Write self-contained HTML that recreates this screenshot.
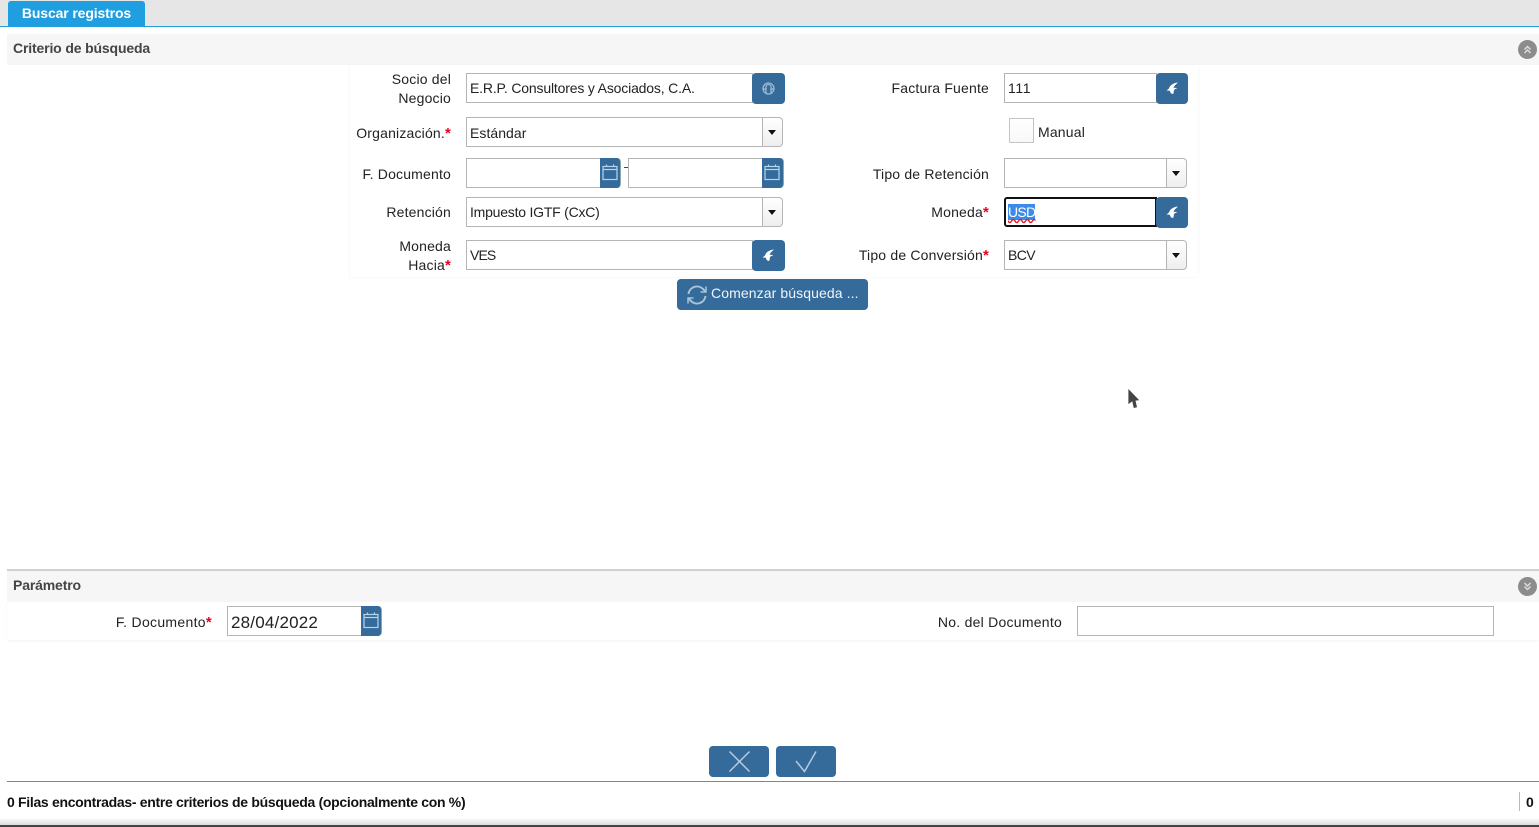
<!DOCTYPE html>
<html><head><meta charset="utf-8"><title>Buscar registros</title>
<style>
html,body{margin:0;padding:0;background:#fff;width:1539px;height:827px;overflow:hidden}
body{position:relative;font-family:"Liberation Sans",sans-serif;font-size:14px;color:#222}
.a{position:absolute;box-sizing:border-box}
.l{position:absolute;text-align:right;line-height:19px;white-space:nowrap;letter-spacing:.18px}
.l i{color:#e8001c;font-style:normal;font-weight:bold;font-size:15px}
.in{position:absolute;box-sizing:border-box;height:30px;background:#fff;border:1px solid #b5b5b5;padding-left:3px;line-height:28px;white-space:nowrap;letter-spacing:-.17px}
.b{position:absolute;box-sizing:border-box;background:#346b9b;border-radius:4px;height:31px}
.c{position:absolute;box-sizing:border-box;background:#346b9b;border-radius:0 4px 4px 0;height:30px;width:21px;border-right:1px solid #8aa}
.d{position:absolute;box-sizing:border-box;width:21px;height:30px;background:linear-gradient(#fff,#eee);border:1px solid #b5b5b5;border-radius:0 4px 4px 0}
.d:after{content:"";position:absolute;left:5px;top:12px;border:4px solid transparent;border-top:5px solid #111;border-bottom:0}
svg{position:absolute;display:block}
.h{position:absolute;left:7px;width:1532px;height:31px;background:#f6f6f6;font-weight:bold;color:#444;line-height:28px;padding-left:6px;box-sizing:border-box;letter-spacing:-.15px}
.t{position:absolute;width:19px;height:19px;border-radius:50%;background:#8c8c8c}
</style></head><body>
<div class="a" style="left:0;top:0;width:1539px;height:26px;background:#e6e6e6"></div>
<div class="a" style="left:0;top:26px;width:1539px;height:1px;background:#1f9fe0"></div>
<div class="a" style="left:8px;top:1px;width:137px;height:25px;background:#1f9fe0;border-radius:3px 3px 0 0;color:#fff;font-weight:bold;text-align:center;line-height:24px;letter-spacing:-.13px">Buscar registros</div>

<div class="h" style="top:34px">Criterio de búsqueda</div>
<div class="t" style="left:1518px;top:40px"><svg width="19" height="19" fill="none" stroke="#ddd" stroke-width="1.5"><path d="M6.500 9.500l3-3 3 3M6.500 13l3-3 3 3"/></svg></div>
<div class="a" style="left:350px;top:65px;width:848px;height:212px;box-shadow:0 0 3px #f2f2f2"></div>

<div class="l" style="left:351px;width:100px;top:70px">Socio del<br>Negocio</div>
<div class="in" style="left:466px;top:73px;width:287px">E.R.P. Consultores y Asociados, C.A.</div>
<div class="b" style="left:752px;top:73px;width:33px"><svg width="33" height="31" fill="none" stroke="#9db8d0" stroke-width="1.300"><circle cx="16.500" cy="15.500" r="5.500"/><path d="M14 20.500V14a2.500 2.500 0 0 1 5 0v6.500M11.500 15.500l3 1.500M21.500 15.500l-3 1.500"/></svg></div>

<div class="l" style="left:351px;width:100px;top:124px">Organización.<i>*</i></div>
<div class="in" style="left:466px;top:117px;width:297px;line-height:30px;letter-spacing:.05px">Estándar</div><div class="d" style="left:762px;top:117px"></div>

<div class="l" style="left:351px;width:100px;top:165px">F. Documento</div>
<div class="in" style="left:466px;top:158px;width:135px"></div>
<div class="c" style="left:600px;top:158px"><svg width="20" height="30" fill="none" stroke="#b9d3e8" stroke-width="1.200"><rect x="3" y="8.500" width="14" height="13"/><path d="M3 11.500h14M6.500 6.500v2M13.500 6.500v2"/></svg></div>
<div class="a" style="left:624px;top:167px;width:4px;height:1px;background:#444"></div>
<div class="in" style="left:628px;top:158px;width:135px"></div>
<div class="c" style="left:762px;top:158px;width:22px"><svg width="20" height="30" fill="none" stroke="#b9d3e8" stroke-width="1.200"><rect x="3" y="8.500" width="14" height="13"/><path d="M3 11.500h14M6.500 6.500v2M13.500 6.500v2"/></svg></div>

<div class="l" style="left:351px;width:100px;top:203px">Retención</div>
<div class="in" style="left:466px;top:197px;width:297px;letter-spacing:-.22px">Impuesto IGTF (CxC)</div><div class="d" style="left:762px;top:197px"></div>

<div class="l" style="left:351px;width:100px;top:237px">Moneda<br>Hacia<i>*</i></div>
<div class="in" style="left:466px;top:240px;width:287px;letter-spacing:-.9px">VES</div>
<div class="b" style="left:752px;top:240px;width:33px"><svg width="33" height="31" fill="#fff"><path d="M22 9.500C16.500 10 13.500 13 13 15.500L10.500 17.500l3.500.3c0 1.700 1.200 3.200 3 3.200 1.200-1.500.3-3 1.500-4.500l3-1.500-4-.3c.5-1.500 2.500-3.500 4.500-5.200z"/></svg></div>

<div class="l" style="left:860px;width:129px;top:79px">Factura Fuente</div>
<div class="in" style="left:1004px;top:73px;width:153px;letter-spacing:.6px">111</div>
<div class="b" style="left:1156px;top:73px;width:32px"><svg width="32" height="31" fill="#fff"><path d="M22 9.500C16.500 10 13.500 13 13 15.500L10.500 17.500l3.500.3c0 1.700 1.200 3.200 3 3.200 1.200-1.500.3-3 1.500-4.500l3-1.500-4-.3c.5-1.500 2.500-3.500 4.500-5.200z"/></svg></div>

<div class="a" style="left:1009px;top:118px;width:25px;height:25px;border:1px solid #c4c4c4;background:linear-gradient(#fff,#f8f8f8)"></div>
<div class="l" style="left:1038px;top:123px;text-align:left">Manual</div>

<div class="l" style="left:860px;width:129px;top:165px">Tipo de Retención</div>
<div class="in" style="left:1004px;top:158px;width:163px"></div><div class="d" style="left:1166px;top:158px"></div>

<div class="l" style="left:860px;width:129px;top:203px">Moneda<i>*</i></div>
<div class="in" style="left:1004px;top:197px;width:153px;border:2px solid #111;border-radius:3px 0 0 3px;padding-left:2px;line-height:26px"><span style="background:#3d8be8;color:#fff;text-decoration:underline wavy #e01b24;letter-spacing:-.7px">USD</span></div>
<div class="b" style="left:1156px;top:197px;width:32px"><svg width="32" height="31" fill="#fff"><path d="M22 9.500C16.500 10 13.500 13 13 15.500L10.500 17.500l3.500.3c0 1.700 1.200 3.200 3 3.200 1.200-1.500.3-3 1.500-4.500l3-1.500-4-.3c.5-1.500 2.500-3.500 4.500-5.200z"/></svg></div>

<div class="l" style="left:850px;width:139px;top:246px">Tipo de Conversión<i>*</i></div>
<div class="in" style="left:1004px;top:240px;width:163px;letter-spacing:-.6px">BCV</div><div class="d" style="left:1166px;top:240px"></div>

<div class="b" style="left:677px;top:279px;width:191px;color:#f0f5fa;line-height:28px;padding-left:34px;white-space:nowrap;letter-spacing:.1px">Comenzar búsqueda ...
<svg style="left:9px;top:5px" width="22" height="22" fill="none" stroke="#a9c2d8" stroke-width="2"><path d="M2.500 10A8.500 8.500 0 0 1 17 5l2.500 2.500M19.500 12A8.500 8.500 0 0 1 5 17l-2.500-2.500"/><path d="M20 2.500V8h-5.500M2 19.500V14h5.500" stroke-width="1.500"/></svg></div>

<svg style="left:1126px;top:386px" width="16" height="25"><path d="M2 2v17l4-3 1.500 6.500 4-1-1.500-6.500 4-.5z" fill="#444" stroke="#fff" stroke-width=".8"/></svg>

<div class="a" style="left:7px;top:569px;width:1532px;height:2px;background:#d0d0cc"></div>
<div class="h" style="top:571px">Parámetro</div>
<div class="t" style="left:1518px;top:577px"><svg width="19" height="19" fill="none" stroke="#ddd" stroke-width="1.500"><path d="M6.500 6l3 3 3-3M6.500 9.500l3 3 3-3"/></svg></div>
<div class="a" style="left:7px;top:602px;width:1532px;height:38px;box-shadow:0 1px 2px #f3f3f3"></div>

<div class="l" style="left:60px;width:152px;top:613px;letter-spacing:.3px">F. Documento<i>*</i></div>
<div class="in" style="left:227px;top:606px;width:135px;font-size:17px;letter-spacing:.2px;color:#222;line-height:31px">28/04/2022</div>
<div class="c" style="left:361px;top:606px"><svg width="20" height="30" fill="none" stroke="#b9d3e8" stroke-width="1.200"><rect x="3" y="8.500" width="14" height="13"/><path d="M3 11.500h14M6.500 6.500v2M13.500 6.500v2"/></svg></div>
<div class="l" style="left:900px;width:162px;top:613px;letter-spacing:.25px">No. del Documento</div>
<div class="in" style="left:1077px;top:606px;width:417px"></div>

<div class="b" style="left:709px;top:746px;width:60px"><svg width="60" height="31" fill="none" stroke="#b5cbdd" stroke-width="1.500"><path d="M20.500 5.500l20 20M40.500 5.500l-20 20"/></svg></div>
<div class="b" style="left:776px;top:746px;width:60px"><svg width="60" height="31" fill="none" stroke="#b5cbdd" stroke-width="1.500"><path d="M20 15l8.500 10.500L40 5.500"/></svg></div>

<div class="a" style="left:7px;top:781px;width:1532px;height:1px;background:#8a8578"></div>
<div class="a" style="left:7px;top:792px;line-height:20px;color:#111;font-weight:bold;font-size:14px;white-space:nowrap;letter-spacing:-.31px">0 Filas encontradas- entre criterios de búsqueda (opcionalmente con %)</div>
<div class="a" style="left:1519px;top:792px;width:1px;height:19px;background:#a3bcee"></div>
<div class="a" style="left:1526px;top:792px;line-height:20px;color:#111;font-weight:bold">0</div>
<div class="a" style="left:0;top:818px;width:1539px;height:7px;background:linear-gradient(#fff,#dcdcdc)"></div>
<div class="a" style="left:0;top:825px;width:1539px;height:2px;background:#444"></div>
</body></html>
